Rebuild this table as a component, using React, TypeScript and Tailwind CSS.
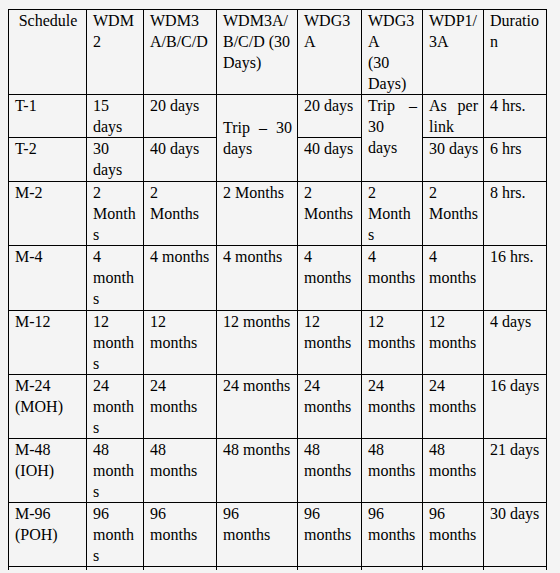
type Cell = {
  lines: string[];
  span?: number;
  middle?: boolean;
  justify?: boolean;
  center?: boolean;
};

const c = (...lines: string[]): Cell => ({ lines });

const widths = [78, 57, 73, 81, 64, 61, 61, 63];

// rows that sit 1px taller in the scan
const tallRows = [2, 4];

const rows: Cell[][] = [
  [
    { lines: ["Schedule"], center: true },
    c("WDM", "2"),
    c("WDM3", "A/B/C/D"),
    c("WDM3A/", "B/C/D (30", "Days)"),
    c("WDG3", "A"),
    c("WDG3", "A", "(30", "Days)"),
    c("WDP1/", "3A"),
    c("Duratio", "n"),
  ],
  [
    c("T-1"),
    c("15", "days"),
    c("20 days"),
    { lines: ["Trip – 30", "days"], span: 2, middle: true, justify: true },
    c("20 days"),
    { lines: ["Trip –", "30", "days"], span: 2, justify: true },
    { lines: ["As per", "link"], justify: true },
    c("4 hrs."),
  ],
  [c("T-2"), c("30", "days"), c("40 days"), c("40 days"), c("30 days"), c("6 hrs")],
  [
    c("M-2"),
    c("2", "Month", "s"),
    c("2", "Months"),
    c("2 Months"),
    c("2", "Months"),
    c("2", "Month", "s"),
    c("2", "Months"),
    c("8 hrs."),
  ],
  [
    c("M-4"),
    c("4", "month", "s"),
    c("4 months"),
    c("4 months"),
    c("4", "months"),
    c("4", "months"),
    c("4", "months"),
    c("16 hrs."),
  ],
  [
    c("M-12"),
    c("12", "month", "s"),
    c("12", "months"),
    c("12 months"),
    c("12", "months"),
    c("12", "months"),
    c("12", "months"),
    c("4 days"),
  ],
  [
    c("M-24", "(MOH)"),
    c("24", "month", "s"),
    c("24", "months"),
    c("24 months"),
    c("24", "months"),
    c("24", "months"),
    c("24", "months"),
    c("16 days"),
  ],
  [
    c("M-48", "(IOH)"),
    c("48", "month", "s"),
    c("48", "months"),
    c("48 months"),
    c("48", "months"),
    c("48", "months"),
    c("48", "months"),
    c("21 days"),
  ],
  [
    c("M-96", "(POH)"),
    c("96", "month", "s"),
    c("96", "months"),
    c("96", "months"),
    c("96", "months"),
    c("96", "months"),
    c("96", "months"),
    c("30 days"),
  ],
];

function TableCell({ cell, tall }: { cell: Cell; tall: boolean }) {
  return (
    <td
      rowSpan={cell.span}
      className={`border border-black pl-[6px] pr-[5px] pt-0 ${tall ? "pb-[1px]" : "pb-0"} ${
        cell.middle ? "align-middle" : "align-top"
      } ${cell.center ? "text-center" : "text-left"}`}
    >
      {cell.lines.map((line, i) => (
        <div
          key={i}
          className={`whitespace-nowrap ${
            cell.justify && line.includes(" ") ? "text-justify [text-align-last:justify]" : ""
          }`}
        >
          {line}
        </div>
      ))}
    </td>
  );
}

export default function App() {
  return (
    <div className="w-[560px] h-[573px] overflow-hidden bg-[#f4f4f4] pl-[8px] pt-[9px] text-black font-['Liberation_Serif',serif] text-[16px] leading-[21px]">
      <table className="table-fixed border-collapse w-[539px]">
        <colgroup>
          {widths.map((w, i) => (
            <col key={i} style={{ width: w }} />
          ))}
        </colgroup>
        <tbody>
          {rows.map((row, r) => (
            <tr key={r}>
              {row.map((cell, i) => (
                <TableCell key={i} cell={cell} tall={tallRows.includes(r)} />
              ))}
            </tr>
          ))}
          <tr className="h-[3px]">
            {widths.map((_, i) => (
              <td key={i} className="border-x border-t border-black p-0" />
            ))}
          </tr>
        </tbody>
      </table>
    </div>
  );
}
